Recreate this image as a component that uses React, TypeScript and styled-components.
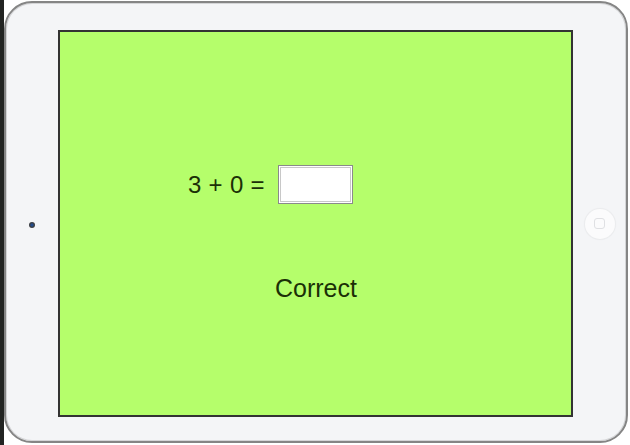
import styled, { createGlobalStyle } from 'styled-components';

const GlobalStyle = createGlobalStyle`
  html, body {
    margin: 0;
    padding: 0;
    background: #ffffff;
    font-family: "Liberation Sans", Arial, sans-serif;
  }
`;

const App = () => {
  return (
    <>
      <GlobalStyle />
      <S.Page>
        <S.Edge />
        <S.Device>
          <S.Side $width={52}>
            <S.Camera />
          </S.Side>
          <S.Screen>
            <S.Equation>
              <S.Expression>3 + 0 =</S.Expression>
              <S.Answer type="text" />
            </S.Equation>
            <S.Feedback>Correct</S.Feedback>
          </S.Screen>
          <S.Side $width={53}>
            <S.HomeButton>
              <S.HomeSquare />
            </S.HomeButton>
          </S.Side>
        </S.Device>
      </S.Page>
    </>
  );
};

export default App;

const S = {
  Page: styled.div`
    display: flex;
    width: 630px;
    height: 445px;
    overflow: hidden;
  `,

  Edge: styled.div`
    width: 4px;
    height: 100%;
    background: #222422;
    flex-shrink: 0;
  `,

  Device: styled.div`
    margin-top: 1px;
    width: 624px;
    height: 442px;
    flex-shrink: 0;
    box-sizing: border-box;
    border: 2px solid #858585;
    border-radius: 28px;
    background: #f4f5f7;
    box-shadow: inset 0 0 0 1px #d4d5d7;
    display: flex;
    align-items: center;
    padding: 27px 0 24px;
  `,

  Side: styled.div<{ $width: number }>`
    width: ${(p) => p.$width}px;
    flex-shrink: 0;
    height: 100%;
    display: flex;
    align-items: center;
    justify-content: center;
  `,

  Camera: styled.div`
    width: 6px;
    height: 6px;
    border-radius: 50%;
    background: radial-gradient(circle, #244c8c 0 1.2px, #3b3e44 2px);
    margin: 2px 0 0 0;
  `,

  HomeButton: styled.div`
    width: 30px;
    height: 30px;
    border-radius: 50%;
    background: #fbfbfc;
    box-shadow: 0 0 0 1px #ebecee, 0 0 2px #e2e3e5;
    display: flex;
    align-items: center;
    justify-content: center;
  `,

  HomeSquare: styled.div`
    width: 9px;
    height: 9px;
    border: 1px solid #dfe0e3;
    border-radius: 3px;
  `,

  Screen: styled.div`
    width: 515px;
    height: 387px;
    flex-shrink: 0;
    box-sizing: border-box;
    border: 2px solid #333333;
    background: #b5fe6b;
    display: flex;
    flex-direction: column;
    align-items: center;
    padding-top: 133px;
  `,

  Equation: styled.div`
    align-self: flex-start;
    margin-left: 128px;
    display: flex;
    align-items: center;
    gap: 13px;
    height: 39px;
  `,

  Expression: styled.span`
    font-size: 24px;
    color: #1b3006;
    letter-spacing: 0.3px;
  `,

  Answer: styled.input`
    width: 75px;
    height: 39px;
    box-sizing: border-box;
    border: 1px solid #8a8a8a;
    box-shadow: inset 0 0 0 1px #ffffff, inset 0 0 0 2px #c8c8c8;
    background: #ffffff;
    margin: 0;
    padding: 0;
    outline: none;
  `,

  Feedback: styled.div`
    margin-top: 70px;
    font-size: 25px;
    line-height: 28px;
    color: #1b3006;
    margin-left: 1px;
  `,
};
